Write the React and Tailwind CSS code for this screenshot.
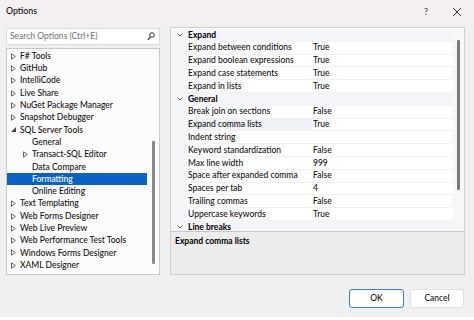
import React from 'react';

const tree = [
  { label: 'F# Tools', level: 0, arrow: 'closed' },
  { label: 'GitHub', level: 0, arrow: 'closed' },
  { label: 'IntelliCode', level: 0, arrow: 'closed' },
  { label: 'Live Share', level: 0, arrow: 'closed' },
  { label: 'NuGet Package Manager', level: 0, arrow: 'closed' },
  { label: 'Snapshot Debugger', level: 0, arrow: 'closed' },
  { label: 'SQL Server Tools', level: 0, arrow: 'open' },
  { label: 'General', level: 1 },
  { label: 'Transact-SQL Editor', level: 1, arrow: 'closed' },
  { label: 'Data Compare', level: 1 },
  { label: 'Formatting', level: 1, selected: true },
  { label: 'Online Editing', level: 1 },
  { label: 'Text Templating', level: 0, arrow: 'closed' },
  { label: 'Web Forms Designer', level: 0, arrow: 'closed' },
  { label: 'Web Live Preview', level: 0, arrow: 'closed' },
  { label: 'Web Performance Test Tools', level: 0, arrow: 'closed' },
  { label: 'Windows Forms Designer', level: 0, arrow: 'closed' },
  { label: 'XAML Designer', level: 0, arrow: 'closed' },
];

const props = [
  { cat: 'Expand' },
  { name: 'Expand between conditions', value: 'True' },
  { name: 'Expand boolean expressions', value: 'True' },
  { name: 'Expand case statements', value: 'True' },
  { name: 'Expand in lists', value: 'True' },
  { cat: 'General' },
  { name: 'Break join on sections', value: 'False' },
  { name: 'Expand comma lists', value: 'True', selected: true },
  { name: 'Indent string', value: '' },
  { name: 'Keyword standardization', value: 'False' },
  { name: 'Max line width', value: '999' },
  { name: 'Space after expanded comma', value: 'False' },
  { name: 'Spaces per tab', value: '4' },
  { name: 'Trailing commas', value: 'False' },
  { name: 'Uppercase keywords', value: 'True' },
  { cat: 'Line breaks' },
];

function Arrow({ type, selected }) {
  if (type === 'open') {
    return (
      <svg width="5" height="5" viewBox="0 0 5 5" className="shrink-0">
        <path d="M5 0 L5 5 L0 5 Z" fill="#444" />
      </svg>
    );
  }
  return (
    <svg width="5" height="7" viewBox="0 0 5 7" className="shrink-0">
      <path d="M0.5 0.8 L4.3 3.5 L0.5 6.2 Z" fill="none" stroke={selected ? '#fff' : '#555'} strokeWidth="0.9" />
    </svg>
  );
}

function TreeRow({ item }) {
  const pad = item.level === 0 ? 'pl-[4px]' : 'pl-[16px]';
  return (
    <div
      className={`h-[12.3px] flex items-center whitespace-nowrap ${pad} ${item.selected ? 'bg-[#0a62c4] text-white' : 'text-[#111]'}`}
    >
      <div className="w-[9px] flex items-center shrink-0">
        {item.arrow && <Arrow type={item.arrow} selected={item.selected} />}
      </div>
      <span>{item.label}</span>
    </div>
  );
}

function PropRow({ row }) {
  if (row.cat) {
    return (
      <div className="h-[12.8px] flex items-center bg-[#f3f5f9] shrink-0 whitespace-nowrap">
        <div className="w-[17px] flex justify-center pl-[1px] shrink-0">
          <svg width="6" height="4" viewBox="0 0 6 4">
            <path d="M0.5 0.5 L3 3 L5.5 0.5" fill="none" stroke="#555" strokeWidth="0.9" />
          </svg>
        </div>
        <span className="font-bold text-[#000]">{row.cat}</span>
      </div>
    );
  }
  return (
    <div className="h-[12.8px] flex items-stretch shrink-0 whitespace-nowrap">
      <div className="w-[16px] bg-[#f3f5f9] shrink-0" />
      <div
        className={`w-[125px] shrink-0 flex items-center pl-[1px] border-b border-[#f2f2f2] ${row.selected ? 'bg-[#eef1f6]' : 'bg-white'}`}
      >
        {row.name}
      </div>
      <div className="flex-1 flex items-center pl-[1px] bg-white border-b border-[#f2f2f2]">{row.value}</div>
    </div>
  );
}

export default function App() {
  return (
    <div className="w-[474px] h-[320px] bg-[#f0f0f0] flex flex-col overflow-hidden font-['Lato',sans-serif] text-[8.5px] font-medium text-[#111] leading-none">
      {/* title bar */}
      <div className="h-[23px] bg-[#f4f0f2] flex items-center pl-[6px] pr-[12px] shrink-0">
        <span className="text-[8.8px]">Options</span>
        <span className="ml-auto text-[9px] text-[#333] mr-[24px]">?</span>
        <svg width="10" height="10" viewBox="0 0 10 10">
          <path d="M1 1 L9 9 M9 1 L1 9" stroke="#333" strokeWidth="1" />
        </svg>
      </div>

      {/* body */}
      <div className="flex gap-[10px] pl-[6px] pr-[9px] pt-[4px] h-[252px] shrink-0">
        {/* left column */}
        <div className="w-[154px] flex flex-col gap-[3px]">
          <div className="h-[17px] bg-white border border-[#dcdcdc] flex items-center pl-[3px] pr-[4px] mt-[1px] whitespace-nowrap">
            <span className="text-[#7a7a7a]">Search Options (Ctrl+E)</span>
            <svg width="8" height="9" viewBox="0 0 8 9" className="ml-auto">
              <circle cx="5" cy="3" r="2.3" fill="none" stroke="#333" strokeWidth="1" />
              <path d="M3.3 4.8 L0.8 7.8" stroke="#333" strokeWidth="1.2" />
            </svg>
          </div>
          <div className="flex-1 bg-[#fcfcfc] border border-[#c8c8c8] flex">
            <div className="flex-1 pt-[1px]">
              {tree.map((t) => (
                <TreeRow key={t.label} item={t} />
              ))}
            </div>
            <div className="w-[12px] flex justify-center">
              <div className="w-[3px] mt-[92px] h-[123px] bg-[#8a8a8a] rounded-[1px]" />
            </div>
          </div>
        </div>

        {/* right column */}
        <div className="flex-1 flex flex-col border border-[#cfcfcf]">
          <div className="h-[204px] flex bg-white overflow-hidden border-b border-[#c8c8c8] pt-[1px]">
            <div className="flex-1 flex flex-col overflow-hidden">
              {props.map((r, i) => (
                <PropRow key={i} row={r} />
              ))}
            </div>
            <div className="w-[12px] bg-[#f7f7f7] flex justify-center">
              <div className="w-[3px] mt-[11px] h-[150px] bg-[#7a7a7a] rounded-[1px]" />
            </div>
          </div>
          <div className="flex-1 bg-[#ececec] px-[4px] pt-[5px] whitespace-nowrap">
            <span className="font-bold text-[#000]">Expand comma lists</span>
          </div>
        </div>
      </div>

      {/* buttons */}
      <div className="flex justify-end gap-[6px] pr-[10px] pt-[14px] shrink-0">
        <div className="w-[55px] h-[19px] bg-white border border-[#3b7fc8] rounded-[3px] flex items-center justify-center">
          OK
        </div>
        <div className="w-[54px] h-[19px] bg-white border border-[#e0e0e0] rounded-[3px] flex items-center justify-center">
          Cancel
        </div>
      </div>

      <div className="mt-auto h-[3px] bg-white shrink-0" />
    </div>
  );
}
